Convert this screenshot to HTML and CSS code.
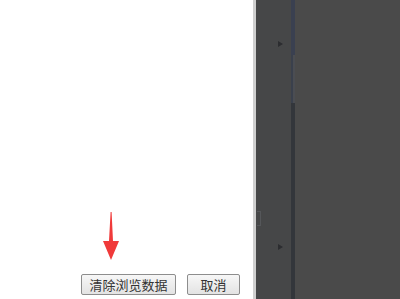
FILE: index.html
```html
<!DOCTYPE html>
<html>
	<head>
		<meta charset="utf-8" />
		<title>清除浏览数据</title>
		<link rel="stylesheet" href="styles.css">
	</head>
	<body>
		<div class="page">
			<div class="dialog">
				<div class="hint">
					<svg width="18" height="48" viewBox="0 0 18 48">
						<path d="M8.6 0 L9.6 0 L11 29 L17 29 L9 48 L1 29 L7 29 Z" fill="#f03a3a"/>
					</svg>
				</div>
				<div class="buttons">
					<button class="btn btn-clear">清除浏览数据</button>
					<button class="btn btn-cancel">取消</button>
				</div>
			</div>
			<div class="edge"></div>
			<div class="side">
				<div class="tree">
					<span class="tri tri-top"></span>
					<span class="bracket"></span>
					<span class="tri tri-bottom"></span>
				</div>
				<div class="rule">
					<div class="rule-top"></div>
					<div class="rule-mid"></div>
					<div class="rule-low"></div>
				</div>
				<div class="main"></div>
			</div>
		</div>
	</body>
</html>
```

FILE: styles.css
```css
html, body {
	margin: 0;
	height: 100%;
	overflow: hidden;
}
body {
	font-family: "Noto Sans CJK SC", "Liberation Sans", sans-serif;
}
.page {
	display: flex;
	height: 299px;
}
.dialog {
	width: 253px;
	background-color: #ffffff;
	display: flex;
	flex-direction: column;
	justify-content: flex-end;
}
.hint {
	padding-left: 102px;
	height: 48px;
	margin-bottom: 14px;
}
.hint svg {
	display: block;
}
.buttons {
	display: flex;
	padding-left: 81px;
	gap: 11px;
	padding-bottom: 4px;
}
.btn {
	height: 21px;
	padding: 0;
	font-family: "Noto Sans CJK SC", sans-serif;
	font-size: 13px;
	line-height: 19px;
	color: #333;
	border: 1px solid #8d8d8d;
	border-radius: 2px;
	background: linear-gradient(#f7f7f7, #e3e3e3);
}
.btn-clear {
	width: 95px;
}
.btn-cancel {
	width: 53px;
}
.edge {
	width: 3px;
	background-color: #cfcfcf;
}
.side {
	flex: 1;
	display: flex;
	background-color: #4a4a4a;
}
.tree {
	width: 35px;
	background-color: #464748;
	position: relative;
}
.tri {
	position: absolute;
	left: 22px;
	width: 0;
	height: 0;
	border-top: 3px solid transparent;
	border-bottom: 3px solid transparent;
	border-left: 5px solid #2c2d30;
}
.tri-top {
	top: 41px;
}
.tri-bottom {
	top: 244px;
}
.bracket {
	position: absolute;
	left: 1px;
	top: 211px;
	width: 3px;
	height: 13px;
	border: 1px solid #55575a;
	border-left: none;
}
.rule {
	width: 4px;
	display: flex;
	flex-direction: column;
	background-color: #34373d;
}
.rule-top {
	height: 55px;
	background-color: #3a4050;
}
.rule-mid {
	height: 48px;
	background: linear-gradient(to right, #3a404c 50%, #4b4d52 50%);
}
.rule-low {
	flex: 1;
	background-color: #33363b;
}
.main {
	flex: 1;
}
```
